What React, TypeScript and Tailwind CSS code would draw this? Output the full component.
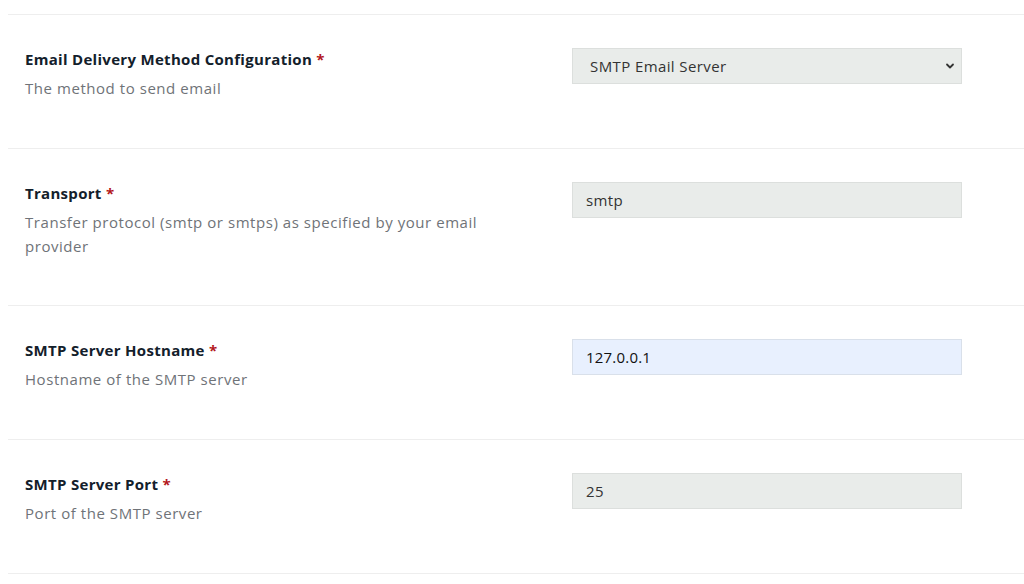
import React from 'react'

type Field = {
    title: string
    description: string
    value: string
    kind: 'select' | 'input' | 'autofill'
}

const fields: Field[] = [
    { title: 'Email Delivery Method Configuration', description: 'The method to send email', value: 'SMTP Email Server', kind: 'select' },
    { title: 'Transport', description: 'Transfer protocol (smtp or smtps) as specified by your email provider', value: 'smtp', kind: 'input' },
    { title: 'SMTP Server Hostname', description: 'Hostname of the SMTP server', value: '127.0.0.1', kind: 'autofill' },
    { title: 'SMTP Server Port', description: 'Port of the SMTP server', value: '25', kind: 'input' },
]

const ChevronDown = () => (
    <svg width="10" height="10" viewBox="0 0 10 10" fill="none" stroke="#333" strokeWidth="1.8" strokeLinecap="round" strokeLinejoin="round">
        <path d="M2 3.5 L5 6.5 L8 3.5" />
    </svg>
)

const FieldRow = ({ field }: { field: Field }) => {
    // long descriptions wrap to two lines, the row is a pixel shorter there
    const multiLine = field.description.length > 40
    return (
        <div className={`flex items-start border-t border-[#eeeeee] pt-[33px] pl-[17px] ${multiLine ? 'pb-[47px]' : 'pb-[48px]'}`}>
            <div className="w-[480px]">
                <p className="text-[15px] leading-[22px] font-bold tracking-[0.3px] text-[#13202b]">
                    {field.title} <span className="text-[#b3171d]">*</span>
                </p>
                <p className="mt-[6px] text-[15px] leading-[24px] tracking-[0.55px] text-[#6f7378]">{field.description}</p>
            </div>
            <div className="ml-[67px] w-[390px]">
                {field.kind === 'select' ? (
                    <div className="relative">
                        <select
                            defaultValue={field.value}
                            className="w-full h-[36px] appearance-none bg-[#e9ecea] border border-[#dcdfdd] pl-[17px] pr-8 text-[15px] tracking-[0.4px] text-[#333333] outline-none"
                        >
                            <option>SMTP Email Server</option>
                            <option>Sendmail</option>
                        </select>
                        <span className="absolute right-[7px] top-[13px] pointer-events-none">
                            <ChevronDown />
                        </span>
                    </div>
                ) : (
                    <input
                        type="text"
                        defaultValue={field.value}
                        className={
                            field.kind === 'autofill'
                                ? 'w-full h-[36px] bg-[#e8f0fe] border border-[#d9e0ea] px-[13px] text-[15px] tracking-[0.2px] text-[#111111] outline-none'
                                : 'w-full h-[36px] bg-[#e9ecea] border border-[#dcdfdd] px-[13px] text-[15px] tracking-[0.4px] text-[#333333] outline-none'
                        }
                    />
                )}
            </div>
        </div>
    )
}

const App = () => {
    return (
        <div className="min-h-screen bg-white pt-[14px] pl-2" style={{ fontFamily: '"Open Sans", sans-serif' }}>
            {fields.map((f) => (
                <FieldRow key={f.title} field={f} />
            ))}
            <div className="border-t border-[#eeeeee]" />
        </div>
    )
}

export default App
